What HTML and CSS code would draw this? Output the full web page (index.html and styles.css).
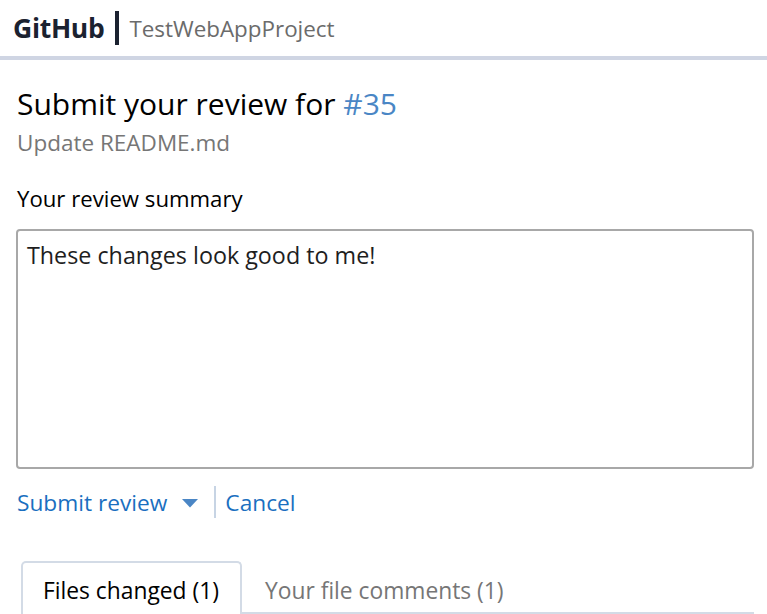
FILE: index.html
```html
<!DOCTYPE html>
<html>
<head>
<meta charset="utf-8">
<link rel="stylesheet" href="styles.css">
</head>
<body>
<header class="topbar">
  <span class="brand">GitHub</span>
  <span class="sep"></span>
  <span class="project">TestWebAppProject</span>
</header>
<main class="content">
  <h1 class="title">Submit your review for <span class="num">#35</span></h1>
  <div class="subtitle">Update README.md</div>
  <label class="label">Your review summary</label>
  <div class="textarea">These changes look good to me!</div>
  <div class="actions">
    <span class="link">Submit review</span>
    <svg class="caret" width="16" height="9" viewBox="0 0 16 9"><path d="M0 0 L16 0 L8 8.5 Z" fill="#4a86c5"/></svg>
    <span class="vsep"></span>
    <span class="link">Cancel</span>
  </div>
  <div class="tabs">
    <div class="tab active">Files changed (1)</div>
    <div class="tab">Your file comments (1)</div>
    <div class="tab-fill"></div>
  </div>
</main>
</body>
</html>
```
FILE: styles.css
```css
html, body { margin: 0; padding: 0; background: #fff; }
body { font-family: "Open Sans", "Noto Sans", sans-serif; color: #000; overflow: hidden; height: 614px; }
.topbar { height: 56px; border-bottom: 4px solid #cfd5e3; display: flex; align-items: center; padding-left: 13px; }
.brand { font-weight: 700; font-size: 26.5px; color: #1b2230; letter-spacing: -0.3px; }
.sep { width: 4px; height: 34px; background: #1b2230; margin: 0 10px 0 11px; }
.project { font-size: 22.4px; color: #6b6b6b; }
.content { padding: 0 13px 0 17px; }
.title { font-weight: 400; font-size: 30px; margin: 24px 0 0; line-height: 40px; color: #000; }
.num { color: #4a86c5; }
.subtitle { font-size: 22.5px; color: #767676; line-height: 30px; margin-top: 4px; }
.label { display: block; font-size: 22.2px; line-height: 30px; margin-top: 26px; }
.textarea { margin-top: 15px; height: 218px; border: 2px solid #a8a8a8; border-radius: 4px; padding: 9px 9px; font-size: 23.3px; line-height: 30px; color: #1e1e1e; margin-left: -1px; }
.actions { display: flex; align-items: center; margin-top: 16px; height: 34px; }
.link { color: #1a6fc0; font-size: 22.7px; }
.caret { margin: 2px 16px 0 15px; }
.vsep { width: 2px; height: 32px; background: #c7d4e4; margin-right: 9px; }
.tabs { display: flex; margin-top: 42px; margin-left: 4px; align-items: flex-start; }
.tab { font-size: 22.8px; line-height: 30px; padding: 15px 24px 0 23px; height: 53px; box-sizing: border-box; color: #767676; border-bottom: 2px solid #d3dbe6; }
.tab.active { color: #000; border: 2px solid #d3dbe6; border-bottom: none; border-radius: 5px 5px 0 0; height: 60px; padding: 13px 21px 0 20px; }
.tab-fill { flex: 1; border-bottom: 2px solid #d3dbe6; height: 53px; box-sizing: border-box; }
```
